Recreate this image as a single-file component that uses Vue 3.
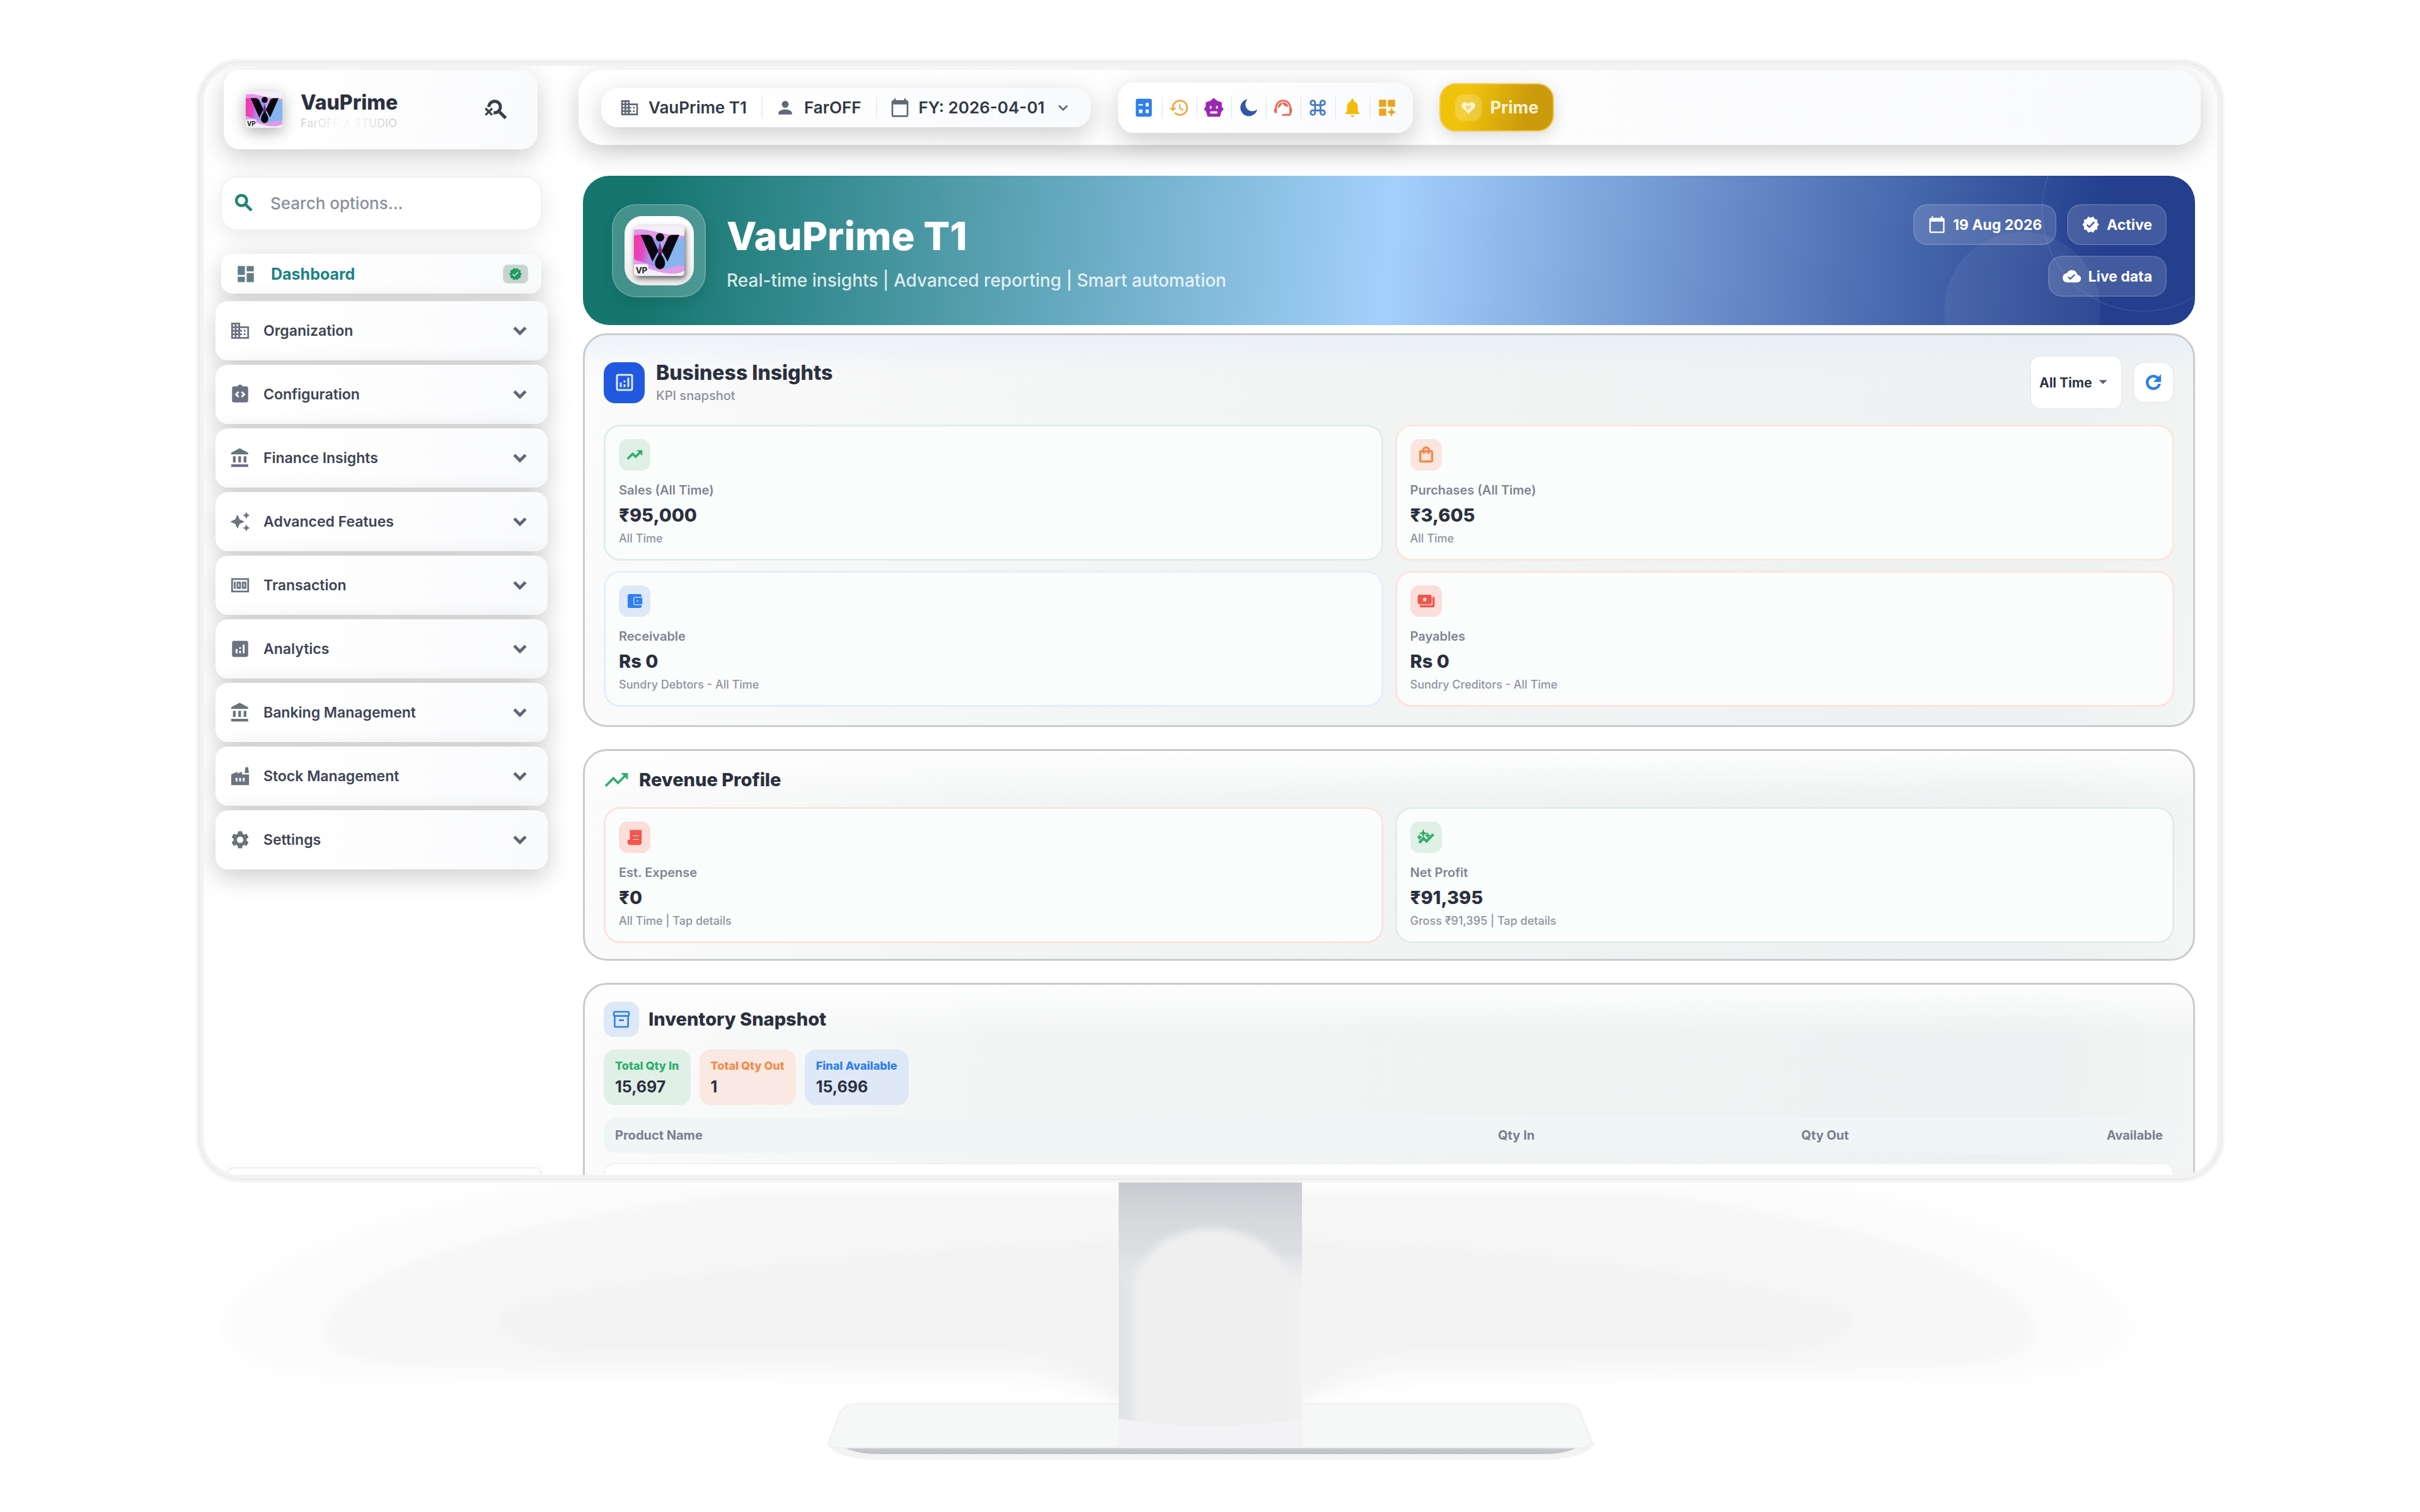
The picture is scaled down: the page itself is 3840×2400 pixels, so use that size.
<script setup>
import { h, ref } from 'vue';

const icons = {
  business: 'M12 7V3H2v18h20V7H12zM6 19H4v-2h2v2zm0-4H4v-2h2v2zm0-4H4V9h2v2zm0-4H4V5h2v2zm4 12H8v-2h2v2zm0-4H8v-2h2v2zm0-4H8V9h2v2zm0-4H8V5h2v2zm10 12h-8v-2h2v-2h-2v-2h2v-2h-2V9h8v10zm-2-8h-2v2h2v-2zm0 4h-2v2h2v-2z',
  person: 'M12 12c2.21 0 4-1.79 4-4s-1.79-4-4-4-4 1.79-4 4 1.79 4 4 4zm0 2c-2.67 0-8 1.34-8 4v2h16v-2c0-2.66-5.33-4-8-4z',
  calendar: 'M20 3h-1V1h-2v2H7V1H5v2H4c-1.1 0-2 .9-2 2v16c0 1.1.9 2 2 2h16c1.1 0 2-.9 2-2V5c0-1.1-.9-2-2-2zm0 18H4V8h16v13z',
  expand: 'M7.41 8.59 12 13.17l4.59-4.58L18 10l-6 6-6-6z',
  caret: 'M5 9h14l-7 7z',
  dashboard: 'M3 13h8V3H3v10zm0 8h8v-6H3v6zm10 0h8V11h-8v10zm0-18v6h8V3h-8z',
  config: 'M19 3h-4.18C14.4 1.84 13.3 1 12 1s-2.4.84-2.82 2H5c-1.1 0-2 .9-2 2v14c0 1.1.9 2 2 2h14c1.1 0 2-.9 2-2V5c0-1.1-.9-2-2-2zM11 14.17l-1.41 1.42L6 12l3.59-3.59L11 9.83 8.83 12 11 14.17zm3.41 1.42L13 14.17 15.17 12 13 9.83l1.41-1.42L18 12l-3.59 3.59z',
  bank: 'M4 10v7h3v-7H4zm6 0v7h3v-7h-3zM2 22h19v-3H2v3zm14-12v7h3v-7h-3zm-4.5-9L2 6v2h19V6l-9.5-5z',
  sparkles: 'M19 9l1.25-2.75L23 5l-2.75-1.25L19 1l-1.25 2.75L15 5l2.75 1.25L19 9zm-7.5.5L9 4 6.5 9.5 1 12l5.5 2.5L9 20l2.5-5.5L17 12l-5.5-2.5zM19 15l-1.25 2.75L15 19l2.75 1.25L19 23l1.25-2.75L23 19l-2.75-1.25L19 15z',
  money: 'M5 8h2v8H5zM12 8H9c-.55 0-1 .45-1 1v6c0 .55.45 1 1 1h3c.55 0 1-.45 1-1V9c0-.55-.45-1-1-1zm-1 6h-1v-4h1v4zm7-6h-3c-.55 0-1 .45-1 1v6c0 .55.45 1 1 1h3c.55 0 1-.45 1-1V9c0-.55-.45-1-1-1zm-1 6h-1v-4h1v4zM2 4v16h20V4H2zm2 14V6h16v12H4z',
  analytics: 'M19 3H5c-1.1 0-2 .9-2 2v14c0 1.1.9 2 2 2h14c1.1 0 2-.9 2-2V5c0-1.1-.9-2-2-2zM9 17H7v-5h2v5zm4 0h-2v-3h2v3zm0-5h-2v-2h2v2zm4 5h-2V7h2v10z',
  analyticsOutline: 'M19 3H5c-1.1 0-2 .9-2 2v14c0 1.1.9 2 2 2h14c1.1 0 2-.9 2-2V5c0-1.1-.9-2-2-2zm0 16H5V5h14v14zM7 12h2v5H7zM15 7h2v10h-2zM11 14h2v3h-2zM11 10h2v2h-2z',
  factory: 'M22 22H2V10l7-3v2l5-2v3h8v12zM17.2 8.5 18 2h3l.8 6.5zM11 14v4h2v-4zM7 14v4h2v-4zM15 14v4h2v-4z',
  settings: 'M19.14 12.94c.04-.3.06-.61.06-.94 0-.32-.02-.64-.07-.94l2.03-1.58c.18-.14.23-.41.12-.61l-1.92-3.32c-.12-.22-.37-.29-.59-.22l-2.39.96c-.5-.38-1.03-.7-1.62-.94l-.36-2.54c-.04-.24-.24-.41-.48-.41h-3.84c-.24 0-.43.17-.47.41l-.36 2.54c-.59.24-1.13.57-1.62.94l-2.39-.96c-.22-.08-.47 0-.59.22L2.74 8.87c-.12.21-.08.47.12.61l2.03 1.58c-.05.3-.09.63-.09.94s.02.64.07.94l-2.03 1.58c-.18.14-.23.41-.12.61l1.92 3.32c.12.22.37.29.59.22l2.39-.96c.5.38 1.03.7 1.62.94l.36 2.54c.05.24.24.41.48.41h3.84c.24 0 .44-.17.47-.41l.36-2.54c.59-.24 1.13-.56 1.62-.94l2.39.96c.22.08.47 0 .59-.22l1.92-3.32c.12-.22.07-.47-.12-.61l-2.01-1.58zM12 15.6c-1.98 0-3.6-1.62-3.6-3.6s1.62-3.6 3.6-3.6 3.6 1.62 3.6 3.6-1.62 3.6-3.6 3.6z',
  search: 'M15.5 14h-.79l-.28-.27C15.41 12.59 16 11.11 16 9.5 16 5.91 13.09 3 9.5 3S3 5.91 3 9.5 5.91 16 9.5 16c1.61 0 3.09-.59 4.23-1.57l.27.28v.79l5 4.99L20.49 19l-4.99-5zm-6 0C7.01 14 5 11.99 5 9.5S7.01 5 9.5 5 14 7.01 14 9.5 11.99 14 9.5 14z',
  searchOff: 'M15.5 14h-.79l-.28-.27C15.41 12.59 16 11.11 16 9.5 16 5.91 13.09 3 9.5 3 6.08 3 3.28 5.64 3.03 9h2.02C5.3 6.75 7.18 5 9.5 5 11.99 5 14 7.01 14 9.5S11.99 14 9.5 14c-.17 0-.33-.03-.5-.05v2.02c.17.02.33.03.5.03 1.61 0 3.09-.59 4.23-1.57l.27.28v.79l5 4.99L20.49 19l-4.99-5zM6.47 10.82L4 13.29l-2.47-2.47-.71.71L3.29 14 .82 16.47l.71.71L4 14.71l2.47 2.47.71-.71L4.71 14l2.47-2.47z',
  trending: 'M16 6l2.29 2.29-4.88 4.88-4-4L2 16.59 3.41 18l6-6 4 4 6.3-6.29L22 12V6z',
  bag: 'M19 6h-2c0-2.76-2.24-5-5-5S7 3.24 7 6H5c-1.1 0-2 .9-2 2v12c0 1.1.9 2 2 2h14c1.1 0 2-.9 2-2V8c0-1.1-.9-2-2-2zm-7-3c1.66 0 3 1.34 3 3H9c0-1.66 1.34-3 3-3zm7 17H5V8h3v2h2V8h4v2h2V8h3v12z',
  wallet: 'M21 18v1c0 1.1-.9 2-2 2H5c-1.11 0-2-.9-2-2V5c0-1.1.89-2 2-2h14c1.1 0 2 .9 2 2v1h-9c-1.11 0-2 .9-2 2v8c0 1.1.89 2 2 2h9zm-9-2h10V8H12v8zm4-2.5c-.83 0-1.5-.67-1.5-1.5s.67-1.5 1.5-1.5 1.5.67 1.5 1.5-.67 1.5-1.5 1.5z',
  payments: 'M19 14V6c0-1.1-.9-2-2-2H3c-1.1 0-2 .9-2 2v8c0 1.1.9 2 2 2h14c1.1 0 2-.9 2-2zm-9-1c-1.66 0-3-1.34-3-3s1.34-3 3-3 3 1.34 3 3-1.34 3-3 3zm13-6v11c0 1.1-.9 2-2 2H4v-2h17V7h2z',
  receipt: 'M19.5 3.5 18 2l-1.5 1.5L15 2l-1.5 1.5L12 2l-1.5 1.5L9 2 7.5 3.5 6 2v14H3v3c0 1.66 1.34 3 3 3h12c1.66 0 3-1.34 3-3V2l-1.5 1.5zM9 9h9v2H9zM9 14h9v2H9z',
  profit: 'M3.9 20 2 18.2l6.5-6.5 4 4 8.1-8.3L22.400 9l-9.8 10.200-4.100-4zM8 2l1.200 3.300L12.500 6.500 9.200 7.700 8 11 6.800 7.700 3.500 6.500 6.800 5.300zM3 9l1 2 2 1-2 1-1 2-1-2-2-1 2-1zM14 6.500l1 2 2 1-2 1-1 2-1-2-2-1 2-1z',
  archive: 'M20 2H4c-1 0-2 .9-2 2v3.01c0 .72.43 1.34 1 1.69V20c0 1.1 1.1 2 2 2h14c.9 0 2-.9 2-2V8.7c.57-.35 1-.97 1-1.69V4c0-1.1-1-2-2-2zm-1 18H5V9h14v11zm1-13H4V4h16v3zM9 12h6v2H9z',
  refresh: 'M17.65 6.35C16.2 4.9 14.21 4 12 4c-4.42 0-7.99 3.58-7.99 8s3.57 8 7.99 8c3.73 0 6.84-2.55 7.73-6h-2.08c-.82 2.33-3.04 4-5.65 4-3.31 0-6-2.69-6-6s2.69-6 6-6c1.66 0 3.14.69 4.22 1.78L13 11h7V4l-2.35 2.35z',
  verified: 'M23 12l-2.44-2.79.34-3.69-3.61-.82-1.89-3.2L12 2.96 8.6 1.5 6.71 4.69 3.1 5.5l.34 3.7L1 12l2.44 2.79-.34 3.7 3.61.82L8.6 22.5l3.4-1.47 3.4 1.46 1.89-3.19 3.61-.82-.34-3.69L23 12zm-12.91 4.72l-3.8-3.81 1.48-1.48 2.32 2.33 5.85-5.87 1.48 1.48-7.33 7.35z',
  cloud: 'M19.35 10.04C18.67 6.59 15.64 4 12 4 9.11 4 6.6 5.64 5.35 8.04 2.34 8.36 0 10.91 0 14c0 3.31 2.69 6 6 6h13c2.76 0 5-2.24 5-5 0-2.64-2.05-4.78-4.65-4.96zM10 17l-3.5-3.5 1.41-1.41L10 14.17 15.18 9l1.41 1.41L10 17z',
  calculate: 'M19 2H5c-1.1 0-2 .9-2 2v16c0 1.1.9 2 2 2h14c1.1 0 2-.9 2-2V4c0-1.1-.9-2-2-2zM6 8h5v1.5H6zM14 6.500h3.500v4H14zM6.500 14h4v4h-4zM14 14h3.500v4H14z',
  history: 'M13 3c-4.97 0-9 4.03-9 9H1l3.89 3.89.07.14L9 12H6c0-3.87 3.13-7 7-7s7 3.13 7 7-3.13 7-7 7c-1.93 0-3.68-.79-4.94-2.06l-1.42 1.42C8.27 19.99 10.51 21 13 21c4.97 0 9-4.03 9-9s-4.03-9-9-9zm-1 5v5l4.28 2.54.72-1.21-3.5-2.08V8H12z',
  bot: 'M12 1l3.5 3 5.5 2v4.500l2 3-2.500 3L19 22H5l-1.500-5.500-2.500-3 2-3V6l5.500-2zM7.500 10v3h2v-3zM14.500 10v3h2v-3zM8 16v2.500h8V16z',
  moon: 'M11 2.500a9.500 9.500 0 1 0 10.800 11.200A7 7 0 0 1 11 2.500z',
  support: 'M21 12.22C21 6.73 16.74 3 12 3c-4.69 0-9 3.65-9 9.28-.6.34-1 .98-1 1.72v2c0 1.1.9 2 2 2h1v-6.1c0-3.87 3.13-7 7-7s7 3.13 7 7V19h-8v2h8c1.1 0 2-.9 2-2v-1.22c.59-.31 1-.92 1-1.64v-2.3c0-.7-.41-1.31-1-1.62zM18 11.03C17.52 8.18 15.04 6 12.05 6c-3.03 0-6.29 2.51-6.03 6.45 2.47-1.01 4.33-3.21 4.86-5.89 1.31 2.63 4 4.44 7.12 4.47z',
  command: 'M17.5 3C15.57 3 14 4.57 14 6.5V8h-4V6.5C10 4.57 8.43 3 6.5 3S3 4.57 3 6.5 4.57 10 6.5 10H8v4H6.5C4.57 14 3 15.57 3 17.5S4.57 21 6.5 21s3.5-1.57 3.5-3.5V16h4v1.5c0 1.93 1.57 3.5 3.5 3.5s3.5-1.57 3.5-3.5-1.57-3.5-3.5-3.5H16v-4h1.5c1.93 0 3.5-1.57 3.5-3.5S19.43 3 17.5 3zM16 8V6.5c0-.83.67-1.5 1.5-1.5s1.5.67 1.5 1.5S18.33 8 17.5 8H16zM6.5 8C5.67 8 5 7.33 5 6.5S5.67 5 6.5 5 8 5.67 8 6.5V8H6.5zM10 14v-4h4v4h-4zM17.5 19c-.83 0-1.5-.67-1.5-1.5V16h1.5c.83 0 1.5.67 1.5 1.5s-.67 1.5-1.5 1.5zM6.5 19c-.83 0-1.5-.67-1.5-1.5S5.67 16 6.5 16H8v1.5c0 .83-.67 1.5-1.5 1.5z',
  bell: 'M12 22.5c1.1 0 2-.9 2-2h-4c0 1.1.9 2 2 2zm6-6.500v-5c0-3.070-1.630-5.640-4.500-6.320V3.500c0-.83-.67-1.500-1.500-1.500s-1.500.67-1.500 1.500v1.180C7.640 5.360 6 7.920 6 11v5l-2 2v1h16v-1l-2-2z',
  widgets: 'M3 3h8v8H3zM13 3h8v8h-8zM3 13h8v8H3zM17 12l1.6 3.4L22 17l-3.4 1.6L17 22l-1.600-3.400L12 17l3.400-1.600z',
  heart: 'M12 21 3.5 12.5C.5 9 2.5 4 7 4c2 0 3.8 1 5 2.500C13.200 5 15 4 17 4c4.500 0 6.500 5 3.500 8.500zM8 9l3.300 7.500V9zM16 9h-3.300v7.500z',
};

const Icon = (props) =>
  h('svg', { viewBox: '0 0 24 24', fill: 'currentColor', 'aria-hidden': 'true' }, [
    h('path', { 'fill-rule': 'evenodd', d: icons[props.name] }),
  ]);

const search = ref('');
const period = ref('All Time');

const menu = [
  { icon: 'business', label: 'Organization' },
  { icon: 'config', label: 'Configuration' },
  { icon: 'bank', label: 'Finance Insights' },
  { icon: 'sparkles', label: 'Advanced Featues' },
  { icon: 'money', label: 'Transaction' },
  { icon: 'analytics', label: 'Analytics' },
  { icon: 'bank', label: 'Banking Management' },
  { icon: 'factory', label: 'Stock Management' },
  { icon: 'settings', label: 'Settings' },
];

const tools = [
  { icon: 'calculate', label: 'Calculator', tone: 'blue' },
  { icon: 'history', label: 'History', tone: 'orange' },
  { icon: 'bot', label: 'Assistant', tone: 'purple' },
  { icon: 'moon', label: 'Dark mode', tone: 'navy' },
  { icon: 'support', label: 'Support', tone: 'red' },
  { icon: 'command', label: 'Shortcuts', tone: 'steel' },
  { icon: 'bell', label: 'Notifications', tone: 'yellow' },
  { icon: 'widgets', label: 'Widgets', tone: 'amber' },
];

const kpis = [
  { icon: 'trending', tone: 'green', label: 'Sales (All Time)', value: '₹95,000', note: 'All Time' },
  { icon: 'bag', tone: 'orange', label: 'Purchases (All Time)', value: '₹3,605', note: 'All Time' },
  { icon: 'wallet', tone: 'blue', label: 'Receivable', value: 'Rs 0', note: 'Sundry Debtors - All Time' },
  { icon: 'payments', tone: 'red', label: 'Payables', value: 'Rs 0', note: 'Sundry Creditors - All Time' },
];

const revenue = [
  { icon: 'receipt', tone: 'red', label: 'Est. Expense', value: '₹0', note: 'All Time | Tap details' },
  { icon: 'profit', tone: 'green', label: 'Net Profit', value: '₹91,395', note: 'Gross ₹91,395 | Tap details' },
];

const totals = [
  { label: 'Total Qty In', value: '15,697', tone: 'green' },
  { label: 'Total Qty Out', value: '1', tone: 'orange' },
  { label: 'Final Available', value: '15,696', tone: 'blue' },
];
</script>

<template>
  <div class="scene">
    <!-- shared logo artwork -->
    <svg class="defs" aria-hidden="true">
      <defs>
        <linearGradient id="logo-bg" x1="0" y1="0.3" x2="1" y2="0.5">
          <stop offset="0" stop-color="#f536a8" />
          <stop offset="0.35" stop-color="#e04cc4" />
          <stop offset="0.6" stop-color="#b38be8" />
          <stop offset="1" stop-color="#6fa6ec" />
        </linearGradient>
        <symbol id="logo" viewBox="0 0 60 60">
          <rect width="60" height="60" rx="5" fill="#f4eef8" />
          <path d="M0 5C18 2 32 12 60 12v42c-16 8-34 0-60-8z" fill="#df9aea" />
          <path d="M0 12c14-4 22 4 32 6l-4 34C18 44 8 44 0 40z" fill="url(#logo-bg)" />
          <path d="M34 20 60 14v34c-10-2-18 4-26 4z" fill="#86b4ee" />
          <path d="M8 11h9c4 1 5 3 6 6l6 13-7 13zM54 11h-9c-4 1-5 3-6 6l-6 13 7 13z" fill="#0b0710" />
          <path d="M31 20 28 32l3 5 3-5z" fill="#7b2c86" />
          <circle cx="31" cy="14" r="5" fill="#0b0710" />
          <path d="M31 32c4 6 6 9 6 13s-3 7-6 7-6-3-6-7 2-7 6-13z" fill="#0b0710" />
          <rect y="46" width="17" height="14" rx="3" fill="#f1f1f1" />
          <text x="2" y="57" class="logo-mark">VP</text>
        </symbol>
      </defs>
    </svg>

    <div class="monitor">
      <div class="screen">
        <aside class="sidebar">
          <div class="brand card">
            <svg class="brand-logo"><use href="#logo" /></svg>
            <div class="brand-text">
              <strong>VauPrime</strong>
              <small>FarOFF X STUDIO</small>
            </div>
            <button class="brand-btn" type="button" aria-label="Close search"><Icon name="searchOff" class="i-brand" /></button>
          </div>

          <label class="search">
            <Icon name="search" class="i-search" />
            <input v-model="search" type="text" placeholder="Search options..." aria-label="Search options" />
          </label>

          <nav class="menu">
            <a class="menu-active card" href="#dashboard">
              <Icon name="dashboard" class="i-menu" />
              <span>Dashboard</span>
              <i class="menu-badge"><Icon name="verified" class="i-badge" /></i>
            </a>
            <button v-for="item in menu" :key="item.label" class="menu-item card" type="button">
              <Icon :name="item.icon" class="i-menu" />
              <span>{{ item.label }}</span>
              <Icon name="expand" class="i-chevron" />
            </button>
          </nav>

          <div class="sidebar-foot"></div>
        </aside>

        <main class="main">
          <header class="topbar card">
            <div class="context card">
              <span class="context-item"><Icon name="business" class="i-top" />VauPrime T1</span>
              <span class="context-item"><Icon name="person" class="i-top" />FarOFF</span>
              <button class="context-item" type="button">
                <Icon name="calendar" class="i-top" />FY: 2026-04-01<Icon name="expand" class="i-down" />
              </button>
            </div>
            <div class="tools card">
              <button v-for="t in tools" :key="t.icon" type="button" :class="`ink-${t.tone}`" :aria-label="t.label">
                <Icon :name="t.icon" class="i-tool" />
              </button>
            </div>
            <button class="prime" type="button">
              <i><Icon name="heart" class="i-heart" /></i>Prime
            </button>
          </header>

          <div class="content">
            <section class="hero">
              <div class="hero-tile"><div class="hero-plate"><svg><use href="#logo" /></svg></div></div>
              <div class="hero-text">
                <h1>VauPrime T1</h1>
                <p>Real-time insights | Advanced reporting | Smart automation</p>
              </div>
              <div class="hero-chips">
                <span><Icon name="calendar" class="i-chip" />19 Aug 2026</span>
                <span><Icon name="verified" class="i-chip" />Active</span>
                <span><Icon name="cloud" class="i-chip" />Live data</span>
              </div>
            </section>

            <section class="panel insights">
              <div class="panel-head">
                <i class="head-icon solid"><Icon name="analyticsOutline" class="i-head" /></i>
                <div class="head-text">
                  <h2>Business Insights</h2>
                  <p>KPI snapshot</p>
                </div>
                <div class="period">
                  <select v-model="period" aria-label="Period">
                    <option>All Time</option>
                  </select>
                  <Icon name="caret" class="i-caret" />
                </div>
                <button class="refresh" type="button" aria-label="Refresh"><Icon name="refresh" class="i-refresh" /></button>
              </div>
              <div class="kpi-grid">
                <article v-for="k in kpis" :key="k.label" class="kpi" :class="`edge-${k.tone}`">
                  <i class="kpi-icon" :class="`tint-${k.tone}`"><Icon :name="k.icon" class="i-kpi" /></i>
                  <h3>{{ k.label }}</h3>
                  <strong>{{ k.value }}</strong>
                  <small>{{ k.note }}</small>
                </article>
              </div>
            </section>

            <section class="panel revenue">
              <div class="panel-head">
                <Icon name="trending" class="i-trend" />
                <h2>Revenue Profile</h2>
              </div>
              <div class="kpi-grid">
                <article v-for="k in revenue" :key="k.label" class="kpi" :class="`edge-${k.tone}`">
                  <i class="kpi-icon" :class="`tint-${k.tone}`"><Icon :name="k.icon" class="i-kpi" /></i>
                  <h3>{{ k.label }}</h3>
                  <strong>{{ k.value }}</strong>
                  <small>{{ k.note }}</small>
                </article>
              </div>
            </section>

            <section class="panel inventory">
              <div class="panel-head">
                <i class="head-icon tint-blue"><Icon name="archive" class="i-archive" /></i>
                <h2>Inventory Snapshot</h2>
              </div>
              <div class="totals">
                <div v-for="t in totals" :key="t.label" :class="`tint-${t.tone}`">
                  <span>{{ t.label }}</span>
                  <strong>{{ t.value }}</strong>
                </div>
              </div>
              <table>
                <thead>
                  <tr>
                    <th scope="col">Product Name</th>
                    <th scope="col">Qty In</th>
                    <th scope="col">Qty Out</th>
                    <th scope="col">Available</th>
                  </tr>
                </thead>
                <tbody>
                  <tr><td colspan="4"></td></tr>
                </tbody>
              </table>
            </section>
          </div>
        </main>
      </div>
    </div>

    <!-- monitor stand and floor shadow -->
    <svg class="stand" viewBox="0 0 3840 520" aria-hidden="true">
      <defs>
        <linearGradient id="neck-x" x1="0" x2="1">
          <stop offset="0" stop-color="#e0e2e3" />
          <stop offset="0.15" stop-color="#eaebec" />
          <stop offset="0.5" stop-color="#f0f0f1" />
          <stop offset="1" stop-color="#f1f1f4" />
        </linearGradient>
        <linearGradient id="neck-top" x1="0" y1="0" x2="0" y2="1">
          <stop offset="0" stop-color="#c9cbd0" />
          <stop offset="0.4" stop-color="#d7dadd" />
          <stop offset="0.65" stop-color="#dcdfe2" />
          <stop offset="1" stop-color="#e8e9eb" stop-opacity="0" />
        </linearGradient>
        <linearGradient id="base-edge" x1="0" y1="0" x2="0" y2="1">
          <stop offset="0" stop-color="#d3d5d9" />
          <stop offset="1" stop-color="#bfc1c8" />
        </linearGradient>
        <filter id="soft" x="-10%" y="-10%" width="120%" height="120%"><feGaussianBlur stdDeviation="10" /></filter>
        <filter id="softer" x="-20%" y="-20%" width="140%" height="140%"><feGaussianBlur stdDeviation="6" /></filter>
        <clipPath id="neck-clip"><path d="M1775 0h291v374c-70 16-220 16-291 0z" /></clipPath>
      </defs>
      <g filter="url(#soft)">
        <path d="M860 0C560 50 350 150 352 232c10 66 110 82 330 88h890c80 4 130 20 190 30h320c60-10 110-26 190-30h780c220-6 320-22 330-88C3380 150 3180 50 2880 0z" fill="#fcfcfc" />
        <path d="M1180 14C800 60 530 140 512 232c4 50 70 60 200 62l900 6c80 10 130 30 160 50h300c30-20 80-40 160-50l800-6c130-2 196-12 200-62C3210 140 2960 60 2600 14z" fill="#f7f7f7" />
        <path d="M1775 90C1400 100 900 160 790 205c-14 30 40 62 120 66h700c80 8 120 36 165 70h290c45-34 85-62 165-70h590c80-4 134-36 120-66C2830 160 2440 100 2065 90z" fill="#f3f3f3" />
      </g>
      <path d="M1312 412c0 14 34 28 74 28h1068c40 0 76-14 76-28z" fill="#f3f3f3" />
      <path d="M1316 408c20 14 44 23 74 23h1064c30 0 52-9 72-23z" fill="url(#base-edge)" />
      <path d="M1365 351h1110c22 0 30 6 33 16l17 42c0 8-6 12-16 12H1332c-10 0-16-4-16-12l16-42c4-10 12-16 33-16z" fill="#f6f7f7" stroke="#efefef" stroke-width="2" />
      <path d="M1775 374h291v46h-291z" fill="#f3f3f5" />
      <path d="M1775 0h291v374c-70 16-220 16-291 0z" fill="url(#neck-x)" />
      <g clip-path="url(#neck-clip)">
        <path d="M1775 0h291v170h-291z" fill="url(#neck-top)" />
        <path d="M1802 400V165c6-62 62-91 120-91s118 29 130 100v226z" fill="#efeff0" filter="url(#softer)" />
      </g>
    </svg>
  </div>
</template>

<style>
body {
  margin: 0;
  background: #fff;
}
</style>

<style scoped>
.scene {
  box-sizing: border-box;
  min-height: 100vh;
  padding-top: 93px;
  overflow: hidden;
  background: #fff;
  color: #2b3040;
  font-family: Inter, "Noto Sans", sans-serif;
  font-optical-sizing: none;
  font-variation-settings: 'opsz' 14;
}

.scene *,
.scene *::before,
.scene *::after {
  box-sizing: border-box;
}

h1, h2, h3, p {
  margin: 0;
}

button {
  padding: 0;
  border: 0;
  background: none;
  color: inherit;
  font: inherit;
}

i {
  display: flex;
  align-items: center;
  justify-content: center;
  font-style: normal;
}

svg {
  display: block;
  flex: none;
}

.defs {
  position: absolute;
  width: 0;
  height: 0;
}

.logo-mark {
  font: 700 10px Inter, sans-serif;
  fill: #222;
}

.monitor {
  aspect-ratio: 3219 / 1784;
  margin: 0 310px 0 311px;
  padding: 8px;
  border: 4px solid #f5f5f5;
  border-radius: 70px;
  background: #f2f2f3;
  box-shadow: inset 0 0 0 2px #eaeaec;
}

.screen {
  display: flex;
  gap: 49px;
  height: 100%;
  padding: 6px 26px 0 19px;
  border-radius: 58px;
  overflow: hidden;
  background: #fff;
}

.card {
  background: linear-gradient(100deg, #fff 20%, #f9fafc);
  box-shadow: 0 12px 40px rgba(0, 0, 0, 0.2);
}

.sidebar {
  display: flex;
  flex-direction: column;
  flex: none;
  width: 527px;
}

.brand {
  display: flex;
  align-items: center;
  height: 126px;
  margin: 0 16px 0 13px;
  padding: 0 44px 0 35px;
  border-radius: 26px;
}

.brand-logo {
  width: 58px;
  height: 58px;
  margin-right: 29px;
  border-radius: 6px;
  box-shadow: 0 6px 24px rgba(0, 0, 0, 0.32);
}

.brand-text {
  display: flex;
  flex-direction: column;
  align-items: flex-start;
  flex: 1;
  padding-top: 4px;
}

.brand-text strong {
  font-size: 32px;
  font-weight: 800;
  line-height: 40px;
}

.brand-text small {
  background: linear-gradient(90deg, #cfcfd2, #f6f6f6 40%, #f6f6f6 55%, #d0d0d3);
  background-clip: text;
  color: transparent;
  font-size: 18px;
  font-weight: 500;
  line-height: 26px;
}

.i-brand {
  width: 40px;
  height: 40px;
  color: #3a3f4b;
  stroke: currentColor;
}

.search {
  display: flex;
  align-items: center;
  gap: 24px;
  height: 86px;
  margin: 43px 9px 0 8px;
  padding: 0 20px 2px 17px;
  border: 2px solid #eef2f1;
  border-radius: 26px;
  background: #fff;
  box-shadow: 0 10px 40px rgba(0, 0, 0, 0.09);
}

.search input {
  flex: 1;
  min-width: 0;
  padding: 0;
  border: 0;
  outline: 0;
  background: none;
  color: #2b3040;
  font: inherit;
  font-size: 26px;
  font-weight: 500;
}

.search input::placeholder {
  color: #8b8f9c;
  opacity: 1;
}

.i-search {
  width: 36px;
  height: 36px;
  color: #1f8378;
  stroke: currentColor;
}

.menu {
  display: flex;
  flex-direction: column;
  gap: 7px;
  margin-top: 37px;
}

.menu-active {
  display: flex;
  align-items: center;
  height: 63px;
  margin: 0 10px 5px 9px;
  padding: 0 21px 0 22px;
  border-radius: 18px;
  color: #1c8286;
  font-size: 25px;
  font-weight: 700;
  text-decoration: none;
}

.menu-active span,
.menu-item span {
  flex: 1;
  text-align: left;
}

.menu-active .i-menu {
  margin-right: 23px;
  color: #647c8a;
}

.menu-badge {
  width: 40px;
  height: 30px;
  border: 2px solid #c3e0cd;
  border-radius: 8px;
  background: #cbd0d3;
}

.i-badge {
  width: 22px;
  height: 22px;
  color: #1e9e5c;
}

.menu-item {
  display: flex;
  align-items: center;
  height: 94px;
  padding: 0 25px 0 22px;
  border-radius: 20px;
  color: #3d4454;
  font-size: 23px;
  font-weight: 600;
}

.i-menu {
  width: 34px;
  height: 34px;
  margin-right: 20px;
  color: #6b7280;
}

.i-chevron {
  width: 38px;
  height: 38px;
  color: #5f6673;
  stroke: currentColor;
}

.sidebar-foot {
  height: 13px;
  margin: auto 8px 0 16px;
  border: 3px solid #f1f3f3;
  border-bottom: 0;
  border-radius: 20px 20px 0 0;
  box-shadow: 0 -2px 20px rgba(0, 0, 0, 0.03);
}

.main {
  flex: 1;
  min-width: 0;
}

.topbar {
  display: flex;
  align-items: center;
  height: 119px;
  padding: 0 36px;
  border-radius: 38px;
}

.context {
  display: flex;
  align-items: center;
  height: 62px;
  padding: 0 29px;
  border-radius: 26px;
}

.context-item {
  display: flex;
  align-items: center;
  gap: 14px;
  color: #323846;
  font-size: 26px;
  font-weight: 600;
  line-height: 34px;
}

.context-item + .context-item {
  margin-left: 23px;
  padding-left: 20px;
  border-left: 2px solid #eceef0;
}

.i-top {
  width: 32px;
  height: 32px;
  color: #626875;
}

.i-down {
  width: 30px;
  height: 30px;
  color: #555c69;
}

.tools {
  display: flex;
  align-items: center;
  height: 80px;
  margin-left: 43px;
  padding: 0 14px;
  border-radius: 26px;
}

.tools button {
  display: flex;
  justify-content: center;
  width: 55px;
}

.tools button + button {
  border-left: 2px solid #eceef0;
}

.i-tool {
  width: 34px;
  height: 34px;
}

.ink-blue { color: #2f80ed; }
.ink-orange { color: #f0a63c; }
.ink-purple { color: #9c27b0; }
.ink-navy { color: #3355a8; }
.ink-red { color: #f4604f; }
.ink-steel { color: #4a79c9; }
.ink-yellow { color: #f0bd0a; }
.ink-amber { color: #eba31c; }

.prime {
  display: flex;
  align-items: center;
  gap: 14px;
  height: 77px;
  margin-left: 42px;
  padding: 0 23px;
  border: 2px solid #f0cd5a;
  border-radius: 26px;
  background: linear-gradient(105deg, #efc30c 25%, #cb9b0c 75%);
  box-shadow: 0 6px 24px rgba(0, 0, 0, 0.14);
  color: #fff3d6;
  font-size: 27px;
  font-weight: 700;
}

.prime i {
  width: 42px;
  height: 42px;
  border-radius: 14px;
  background: rgba(255, 255, 255, 0.2);
}

.i-heart {
  width: 26px;
  height: 26px;
}

.content {
  display: flex;
  flex-direction: column;
  gap: 35px;
  padding: 49px 9px 0 7px;
}

.hero {
  position: relative;
  display: flex;
  align-items: center;
  height: 237px;
  margin-bottom: -22px;
  padding: 0 45px 0 46px;
  border-radius: 42px;
  overflow: hidden;
  background: linear-gradient(95deg, #14766f 4%, #a4d0fc 50%, #233f8e 94%);
  color: #fff;
}

.hero::before,
.hero::after {
  content: '';
  position: absolute;
  border-radius: 50%;
}

.hero::before {
  top: -106px;
  right: -78px;
  width: 322px;
  height: 322px;
  border: 2px solid rgba(255, 255, 255, 0.08);
}

.hero::after {
  right: 150px;
  bottom: -100px;
  width: 248px;
  height: 248px;
  background: rgba(255, 255, 255, 0.06);
}

.hero-tile {
  display: flex;
  align-items: center;
  justify-content: center;
  width: 149px;
  height: 148px;
  border: 2px solid rgba(255, 255, 255, 0.16);
  border-radius: 38px;
  background: rgba(255, 255, 255, 0.2);
  box-shadow: 0 8px 24px rgba(0, 0, 0, 0.1);
}

.hero-plate {
  display: flex;
  align-items: center;
  justify-content: center;
  width: 110px;
  height: 110px;
  border-radius: 28px;
  background: linear-gradient(#fff, #ececec);
}

.hero-plate svg {
  width: 80px;
  height: 80px;
  border-radius: 6px;
  box-shadow: 2px 4px 8px rgba(0, 0, 0, 0.6);
}

.hero-text {
  flex: 1;
  padding: 5px 0 0 33px;
}

.hero-text h1 {
  font-size: 62px;
  font-weight: 800;
  line-height: 72px;
}

.hero-text p {
  margin-top: 17px;
  color: rgba(255, 255, 255, 0.84);
  font-size: 28px;
  font-weight: 500;
  line-height: 34px;
}

.hero-chips {
  position: relative;
  z-index: 1;
  display: flex;
  flex-wrap: wrap;
  justify-content: flex-end;
  gap: 17px;
  width: 440px;
}

.hero-chips span {
  display: flex;
  align-items: center;
  gap: 11px;
  height: 65px;
  padding: 0 21px;
  border: 2px solid rgba(255, 255, 255, 0.12);
  border-radius: 22px;
  background: rgba(255, 255, 255, 0.14);
  font-size: 23px;
  font-weight: 700;
}

.i-chip {
  width: 29px;
  height: 29px;
}

.panel {
  padding: 30px;
  border: 3px solid #c9cccc;
  border-radius: 38px;
  background:
    linear-gradient(rgba(255, 255, 255, 0.9), rgba(255, 255, 255, 0) 80px),
    linear-gradient(97deg, #fbfbfb, #f3f5f5 25%, #eef1f1 90%, #f4f5f5);
}

.insights {
  padding: 32px 30px 29px;
  background:
    linear-gradient(rgba(226, 236, 248, 0.5), rgba(255, 255, 255, 0) 60px),
    linear-gradient(97deg, #fbfbfb, #f5f6f6 25%, #edf1f1 90%, #f4f5f5);
}

.panel-head {
  display: flex;
  align-items: center;
}

.panel-head h2 {
  font-size: 29px;
  font-weight: 800;
  line-height: 36px;
}

.head-icon {
  width: 56px;
  height: 56px;
  margin-right: 15px;
  border-radius: 16px;
}

.head-icon.solid {
  width: 65px;
  height: 65px;
  margin-right: 18px;
  border-radius: 18px;
  background: #2158e0;
  color: #d9e8fb;
}

.i-head {
  width: 36px;
  height: 36px;
}

.head-text {
  flex: 1;
}

.head-text h2 {
  font-size: 32px;
  line-height: 40px;
}

.head-text p {
  padding-top: 2px;
  color: #8b8f9c;
  font-size: 20px;
  font-weight: 500;
  line-height: 28px;
}

.period {
  position: relative;
  margin-right: 16px;
}

.period select {
  display: block;
  appearance: none;
  height: 86px;
  padding: 0 46px 0 13px;
  border: 2px solid #ebebee;
  border-radius: 16px;
  background: #fff;
  color: #2e3442;
  font: inherit;
  font-size: 21px;
  font-weight: 700;
}

.i-caret {
  position: absolute;
  top: 50%;
  right: 20px;
  width: 22px;
  height: 22px;
  margin-top: -12px;
  color: #5f6470;
  pointer-events: none;
}

.refresh {
  display: flex;
  align-items: center;
  justify-content: center;
  width: 66px;
  height: 66px;
  border: 2px solid #ebebee;
  border-radius: 18px;
  background: #fff;
  color: #2b7de9;
}

.i-refresh {
  width: 34px;
  height: 34px;
  stroke: currentColor;
}

.insights .panel-head {
  margin-bottom: 24px;
}

.kpi-grid {
  display: grid;
  grid-template-columns: 1fr 1fr;
  gap: 16px 19px;
}

.kpi {
  height: 216px;
  padding: 20px 21px;
  border: 3px solid;
  border-radius: 26px;
  background: #fbfdfc;
}

.edge-green { border-color: #dfefe6; }
.edge-orange { border-color: #fce6de; }
.edge-blue { border-color: #e3effa; }
.edge-red { border-color: #fce3de; }

.kpi-icon {
  width: 50px;
  height: 50px;
  margin-bottom: 16px;
  border-radius: 14px;
}

.i-kpi {
  width: 28px;
  height: 28px;
  stroke: currentColor;
}

.tint-green { background: #e0f0e6; color: #2fae6b; }
.tint-orange { background: #fbe6df; color: #f5894a; }
.tint-blue { background: #dee8f7; color: #2f80ed; }
.tint-red { background: #fbdeda; color: #f0564c; }

.kpi h3 {
  color: #7f8491;
  font-size: 20px;
  font-weight: 600;
  line-height: 30px;
}

.kpi strong,
.kpi small {
  display: block;
}

.kpi strong {
  font-size: 29px;
  font-weight: 800;
  line-height: 50px;
}

.kpi small {
  color: #8f93a0;
  font-size: 18px;
  font-weight: 500;
  line-height: 24px;
}

.revenue {
  padding: 28px 30px 25px;
}

.revenue .panel-head {
  margin-bottom: 25px;
}

.i-trend {
  width: 44px;
  height: 44px;
  margin: -4px 14px -4px -2px;
  color: #2fae6b;
}

.inventory {
  padding: 27px 30px 0;
}

.i-archive {
  width: 32px;
  height: 32px;
}

.totals {
  display: flex;
  gap: 14px;
  margin: 20px 0;
}

.totals div {
  padding: 10px 18px 12px;
  border-radius: 18px;
}

.totals .tint-orange {
  background: #f9e9e2;
}

.totals span,
.totals strong {
  display: block;
}

.totals span {
  font-size: 18px;
  font-weight: 800;
  line-height: 32px;
}

.totals strong {
  color: #2b3040;
  font-size: 25px;
  font-weight: 700;
  line-height: 34px;
}

table {
  width: 100%;
  border-collapse: separate;
  border-spacing: 0;
  table-layout: fixed;
}

th {
  height: 56px;
  width: 20%;
  padding: 0 18px;
  background: #f0f5f8;
  color: #7a7f8b;
  font-size: 20px;
  font-weight: 700;
  text-align: right;
}

th:first-child {
  width: auto;
  border-radius: 18px 0 0 18px;
  text-align: left;
}

th:last-child {
  border-radius: 0 18px 18px 0;
}

tbody::before {
  content: '';
  display: block;
  height: 16px;
}

td {
  height: 70px;
  border: 2px solid #f0f2f2;
  border-radius: 18px;
  background: #fff;
}

.stand {
  width: 100%;
}
</style>
